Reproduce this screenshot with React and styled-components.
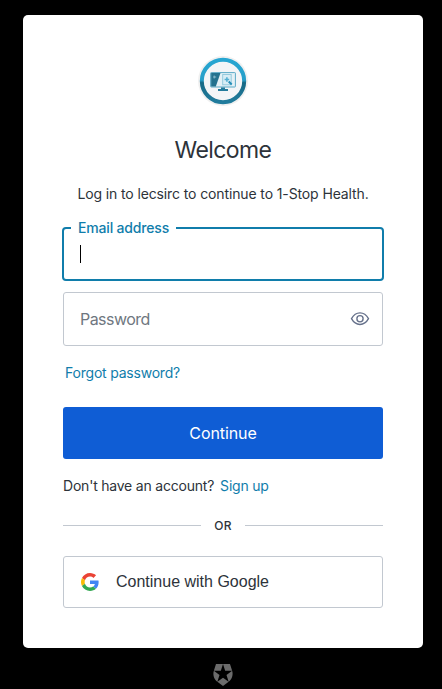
import React from "react";
import styled, { createGlobalStyle } from "styled-components";

const GlobalStyle = createGlobalStyle`
  *, *::before, *::after { box-sizing: border-box; }
  body {
    margin: 0;
    background: #000;
    color: #2d333a;
    font-family: Inter, "Liberation Sans", sans-serif;
    font-size: 14px;
    line-height: 20px;
  }
`;

const Page = styled.main`
  height: 689px;
  padding-top: 15px;
  display: flex;
  flex-direction: column;
  align-items: center;
  padding-left: 4px;
  overflow: hidden;
`;

const Card = styled.section`
  width: 400px;
  height: 633px;
  flex: none;
  padding: 40px 40px 0;
  background: #fff;
  border-radius: 5px;
  display: flex;
  flex-direction: column;
`;

const Logo = styled.svg`
  width: 52px;
  height: 52px;
  align-self: center;
`;

const Title = styled.h1`
  margin: 27px 0 0;
  font-size: 23px;
  line-height: 32px;
  font-weight: 400;
  letter-spacing: -0.6px;
  text-align: center;
`;

const Intro = styled.p`
  margin: 18px 0 0;
  text-align: center;
  letter-spacing: -0.12px;
`;

const Field = styled.div`
  position: relative;
  height: 54px;
  flex: none;
  margin: ${(p) => (p.$focused ? "23px -1px 0" : "11px 0 0")};
  padding: 0 ${(p) => (p.$focused ? 15 : 12)}px 0 16px;
  display: flex;
  align-items: center;
  justify-content: space-between;
  border: ${(p) => (p.$focused ? "2px solid #107dab" : "1px solid #c2c8d0")};
  border-radius: ${(p) => (p.$focused ? 4 : 3)}px;
`;

const FieldLabel = styled.span`
  position: absolute;
  top: -11px;
  left: 7px;
  padding: 0 7px;
  background: #fff;
  color: #107dab;
  font-weight: 500;
  letter-spacing: -0.17px;
`;

const Caret = styled.span`
  width: 1px;
  height: 18px;
  background: #000;
`;

const Placeholder = styled.span`
  font-size: 16px;
  letter-spacing: -0.55px;
  color: #6f7780;
`;

const EyeIcon = styled.svg`
  width: 20px;
  height: 20px;
`;

const TextLink = styled.a`
  color: #107dab;
  font-weight: 400;
`;

const ForgotRow = styled.div`
  margin: 17px 0 0 2px;
  letter-spacing: -0.21px;
`;

const PrimaryButton = styled.button`
  height: 52px;
  flex: none;
  margin: 24px 0 0;
  border: 0;
  border-radius: 3px;
  background: #0f5dd5;
  color: #fff;
  font: 400 16px/20px Inter, sans-serif;
  letter-spacing: -0.1px;
`;

const SignupRow = styled.div`
  display: flex;
  gap: 6px;
  margin-top: 17px;
  letter-spacing: -0.21px;
`;

const Divider = styled.div`
  display: flex;
  align-items: center;
  gap: 13px;
  height: 20px;
  margin-top: 20px;
  font-size: 12px;
  font-weight: 500;
  letter-spacing: 0.2px;
  &::before, &::after {
    content: "";
    flex: 1;
    height: 1px;
    margin-top: -1px;
    background: #c2c8d0;
  }
`;

const SocialButton = styled.button`
  display: flex;
  align-items: center;
  gap: 17px;
  height: 52px;
  flex: none;
  margin-top: 20px;
  padding: 0 16px 0 17px;
  border: 1px solid #c2c8d0;
  border-radius: 3px;
  background: #fff;
  color: #2d333a;
  font: 400 16px/20px "Liberation Sans", Arial, sans-serif;
`;

const GoogleIcon = styled.svg`
  width: 18px;
  height: 18px;
`;

const Badge = styled.svg`
  width: 22px;
  height: 22px;
  margin-top: 16px;
  flex: none;
`;

function BrandLogo() {
  return (
    <Logo viewBox="0 0 52 52" aria-hidden="true">
      <defs>
        <linearGradient id="ring" x1="0" y1="0" x2="0" y2="1">
          <stop offset="0" stopColor="#27a6d2" />
          <stop offset=".48" stopColor="#269ec8" />
          <stop offset=".54" stopColor="#176985" />
          <stop offset="1" stopColor="#217c9d" />
        </linearGradient>
      </defs>
      <circle cx="26" cy="26" r="25" fill="#f0f0f0" />
      <circle cx="26" cy="26" r="21.2" fill="#f3f5f7" stroke="url(#ring)" strokeWidth="4" />
      <rect x="13.6" y="17.6" width="24.8" height="14.4" rx=".6" fill="#e4f1f6" stroke="#5ba9c6" strokeWidth="1" />
      <path d="M14.1 18.1H23.5L18.8 31.5H14.1Z" fill="#23728f" />
      <path d="M16.2 22h3M17.2 20.5v3" stroke="#9dc8d8" strokeWidth=".8" />
      <rect x="25.7" y="19.5" width="8.5" height="10.3" fill="#d8edf5" stroke="#8fc6da" strokeWidth=".9" />
      <path d="M27.6 24.5h4.6M29.9 22.2v4.6" stroke="#55b0d2" strokeWidth="1.6" />
      <path d="m31.7 26.5 3 3" stroke="#268eb8" strokeWidth="2" />
      <path d="M24 32.5h4v1.5h3v1.9H21V34h3Z" fill="#237b9c" />
    </Logo>
  );
}

export default function App() {
  return (
    <>
      <GlobalStyle />
      <Page>
        <Card>
          <BrandLogo />
          <Title>Welcome</Title>
          <Intro>Log in to lecsirc to continue to 1-Stop Health.</Intro>
          <Field $focused>
            <FieldLabel>Email address</FieldLabel>
            <Caret />
          </Field>
          <Field>
            <Placeholder>Password</Placeholder>
            <EyeIcon viewBox="0 0 20 20" fill="none" stroke="#65708a" strokeWidth="1.35">
              <path d="M1.5 9.7C3.7 5.7 6.7 3.9 10 3.9S16.3 5.7 18.5 9.7C16.3 13.7 13.3 15.5 10 15.5S3.7 13.7 1.5 9.7Z" />
              <circle cx="10" cy="9.7" r="3.1" />
            </EyeIcon>
          </Field>
          <ForgotRow>
            <TextLink>Forgot password?</TextLink>
          </ForgotRow>
          <PrimaryButton>Continue</PrimaryButton>
          <SignupRow>
            <span>Don't have an account?</span>
            <TextLink>Sign up</TextLink>
          </SignupRow>
          <Divider>OR</Divider>
          <SocialButton>
            <GoogleIcon viewBox="0 0 48 48" aria-hidden="true">
              <path fill="#EA4335" d="M24 9.5c3.54 0 6.71 1.22 9.21 3.6l6.85-6.85C35.9 2.38 30.47 0 24 0 14.62 0 6.51 5.38 2.56 13.22l7.98 6.19C12.43 13.72 17.74 9.5 24 9.5z" />
              <path fill="#4285F4" d="M46.98 24.55c0-1.57-.15-3.09-.38-4.55H24v9.02h12.94c-.58 2.96-2.26 5.48-4.78 7.18l7.73 6c4.51-4.18 7.09-10.36 7.09-17.65z" />
              <path fill="#FBBC05" d="M10.53 28.59c-.48-1.45-.76-2.99-.76-4.59s.27-3.14.76-4.59l-7.98-6.19C.92 16.46 0 20.12 0 24c0 3.88.92 7.54 2.56 10.78l7.97-6.19z" />
              <path fill="#34A853" d="M24 48c6.48 0 11.93-2.13 15.89-5.81l-7.73-6c-2.15 1.45-4.92 2.3-8.16 2.3-6.26 0-11.57-4.22-13.47-9.91l-7.98 6.19C6.51 42.62 14.62 48 24 48z" />
            </GoogleIcon>
            <span>Continue with Google</span>
          </SocialButton>
        </Card>
        <Badge viewBox="0 0 24 24" fill="#6b6b6b" aria-hidden="true">
          <path d="M21.98 7.448L19.62 0H4.347L2.02 7.448c-1.352 4.312.03 9.206 3.815 12.015L12.007 24l6.157-4.552c3.755-2.81 5.182-7.688 3.815-12.015l-6.16 4.58 2.343 7.45-6.157-4.597-6.158 4.58 2.358-7.433-6.188-4.55 7.63-.045L12.008 0l2.356 7.404 7.615.044z" />
        </Badge>
      </Page>
    </>
  );
}
